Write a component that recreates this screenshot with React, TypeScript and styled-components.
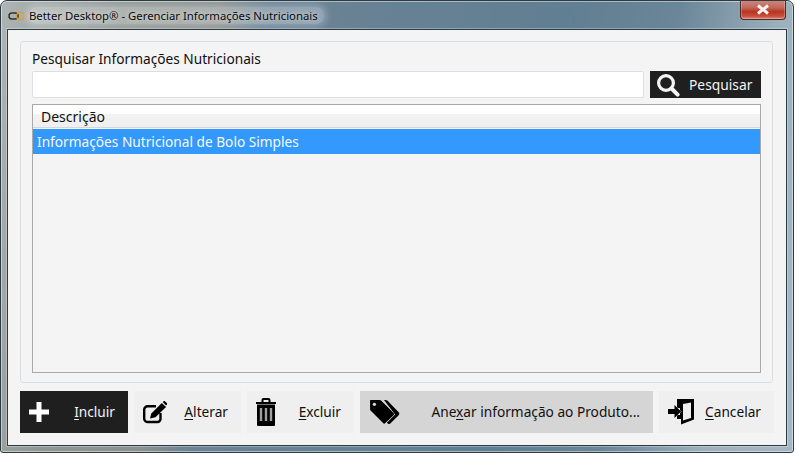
import React from "react";
import styled, { createGlobalStyle } from "styled-components";

const GlobalStyle = createGlobalStyle`
  html, body {
    margin: 0;
    padding: 0;
    background: #fff;
    font-family: "Noto Sans", "Open Sans", sans-serif;
  }
`;

const Frame = styled.div`
  width: 794px;
  height: 453px;
  box-sizing: border-box;
  display: flex;
  flex-direction: column;
  border: 1px solid #2f3b44;
  border-radius: 7px 7px 3px 3px;
  box-shadow: inset 0 0 0 1px rgba(255, 255, 255, 0.45);
  background: linear-gradient(
    100deg,
    #adb5b5 0%,
    #8f9793 14%,
    #8a928f 25%,
    #6b8395 31%,
    #617f92 65%,
    #6a8698 78%,
    #9db1bd 90%,
    #a5b7c2 100%
  );
  overflow: hidden;
`;

const TitleBar = styled.div`
  height: 28px;
  flex: none;
  display: flex;
  align-items: flex-start;
  padding-left: 7px;
`;

const TitleLogo = styled.svg`
  width: 17px;
  height: 10px;
  margin-top: 10px;
  flex: none;
`;

const TitleText = styled.span`
  margin: 6px 0 0 4px;
  padding: 0 6px 0 0;
  font-size: 11.35px;
  line-height: 17px;
  color: #0c0c0c;
  border-radius: 8px;
  background: rgba(255, 255, 255, 0.28);
  box-shadow: 0 0 7px 3px rgba(255, 255, 255, 0.24);
  text-shadow: 0 0 5px rgba(255, 255, 255, 0.8);
`;

const CloseButton = styled.div`
  width: 46px;
  height: 20px;
  margin: -1px 7px 0 auto;
  flex: none;
  display: flex;
  align-items: center;
  justify-content: center;
  box-sizing: border-box;
  border: 1px solid #4d2a28;
  border-top: none;
  border-radius: 0 0 4px 4px;
  background: linear-gradient(#d08a7e 0%, #c0685a 40%, #b8341f 62%, #c9503c 85%, #d98a78 100%);
  box-shadow: inset 0 0 0 1px rgba(255, 255, 255, 0.25);
`;

const Client = styled.div`
  flex: 1;
  margin: 0 6px 6px 6px;
  display: flex;
  flex-direction: column;
  box-sizing: border-box;
  padding: 11px 12px 12px 12px;
  gap: 8px;
  background: #f4f4f4;
  border: 1px solid #2c3a44;
  box-shadow: 0 0 0 1px rgba(255, 255, 255, 0.3);
`;

const Panel = styled.div`
  flex: 1;
  width: 753px;
  box-sizing: border-box;
  display: flex;
  flex-direction: column;
  padding: 9px 11px 9px 11px;
  border: 1px solid #d9dee3;
  border-radius: 3px;
  background: #f4f4f4;
`;

const SearchLabel = styled.label`
  font-size: 13.7px;
  line-height: 16px;
  height: 20px;
  color: #101010;
`;

const SearchRow = styled.div`
  display: flex;
  gap: 6px;
  height: 27px;
  margin-bottom: 6px;
`;

const SearchInput = styled.input`
  width: 612px;
  box-sizing: border-box;
  border: 1px solid #dcdfe3;
  border-radius: 2px;
  background: #fff;
  outline: none;
`;

const SearchButton = styled.div`
  width: 111px;
  display: flex;
  align-items: center;
  box-sizing: border-box;
  padding-left: 6px;
  gap: 9px;
  background: #1f1f1f;
  color: #f4f4f4;
  font-size: 13.8px;
`;

const Grid = styled.div`
  flex: 1;
  box-sizing: border-box;
  width: 729px;
  border: 1px solid #aaaaaa;
  background: #f4f4f4;
`;

const GridHeader = styled.div`
  height: 23px;
  box-sizing: border-box;
  padding-left: 8px;
  font-size: 14px;
  line-height: 23px;
  color: #101010;
  border-bottom: 1px solid #d6d6d6;
  background: linear-gradient(#ffffff 0%, #ffffff 40%, #f3f3f3 41%, #efefef 100%);
`;

const GridRow = styled.div<{ $selected?: boolean }>`
  height: 25px;
  margin-top: 1px;
  padding-left: 4px;
  font-size: 13.7px;
  line-height: 25px;
  color: ${(p) => (p.$selected ? "#f4f8ff" : "#101010")};
  background: ${(p) => (p.$selected ? "#3399ff" : "transparent")};
`;

const Actions = styled.div`
  display: flex;
  gap: 6px;
  height: 42px;
  flex: none;
`;

const ActionButton = styled.div<{ $width: number; $tone?: "dark" | "mid" }>`
  width: ${(p) => p.$width}px;
  box-sizing: border-box;
  display: flex;
  align-items: center;
  justify-content: space-between;
  padding: 0 13px 0 9px;
  font-size: 13.7px;
  color: ${(p) => (p.$tone === "dark" ? "#f4f4f4" : "#111")};
  background: ${(p) =>
    p.$tone === "dark" ? "#1f1f1f" : p.$tone === "mid" ? "#d5d5d5" : "#efefef"};

  span {
    padding-bottom: 2px;
  }

  u {
    text-underline-offset: 2px;
  }
`;

const SearchIcon = () => (
  <svg width="24" height="24" viewBox="0 0 24 24">
    <circle cx="10" cy="10" r="7.4" fill="none" stroke="#f4f4f4" strokeWidth="3.2" />
    <path d="M15.5 15.5 L21.6 21.6" stroke="#f4f4f4" strokeWidth="4" strokeLinecap="round" />
  </svg>
);

const PlusIcon = () => (
  <svg width="20" height="20" viewBox="0 0 20 20">
    <path d="M7.500 0h5v7.500H20v5h-7.500V20h-5v-7.500H0v-5h7.500z" fill="#fff" />
  </svg>
);

const EditIcon = () => (
  <svg width="24" height="24" viewBox="0 0 24 24">
    <path
      d="M17.500 13v6a3 3 0 0 1-3 3H5a3.500 3.500 0 0 1-3.800-3.500V10a3.500 3.500 0 0 1 3.500-3.700H13"
      fill="none"
      stroke="#000"
      strokeWidth="2.400"
    />
    <path d="M7 18.500l1.300-5L18.800 3l4.300 4L12.500 17.300z" fill="#000" />
    <path d="M19.800 2l1-1 .8 0 2.400 2.300v1l-1 1.200z" fill="#000" />
  </svg>
);

const TrashIcon = () => (
  <svg width="20" height="28" viewBox="0 0 20 28">
    <path d="M6.500 4V2a1 1 0 0 1 1-1h5a1 1 0 0 1 1 1v2" fill="none" stroke="#000" strokeWidth="2" />
    <rect x="0" y="4" width="20" height="2" fill="#000" />
    <path d="M1 6.500h18V27a1 1 0 0 1-1 1H2a1 1 0 0 1-1-1z" fill="#000" />
    <path d="M5 10v13M10 10v13M15 10v13" stroke="#a0a0a0" strokeWidth="2.400" />
  </svg>
);

const TagsIcon = () => (
  <svg width="31" height="26" viewBox="0 0 32 27">
    <path
      d="M1.500 1h9.500a2 2 0 0 1 1.400.6l13 13a1.600 1.600 0 0 1 0 2.300L16.800 25a1.600 1.600 0 0 1-2.300 0l-13-13A2 2 0 0 1 1 10.500V1.500z"
      fill="#000"
    />
    <circle cx="5.500" cy="5.500" r="1.700" fill="#d5d5d5" />
    <path
      d="M15.500 1h2a2 2 0 0 1 1.400.6l11.600 12a2.600 2.600 0 0 1 0 3.600L22 25.500a2 2 0 0 1-2.600 0L18.500 24.700 27 16z"
      fill="#000"
    />
  </svg>
);

const ExitIcon = () => (
  <svg width="26" height="26" viewBox="0 0 26 26">
    <path d="M9 0H26V20.500L13 25.500V20H9V16H12V9H9z" fill="#000" />
    <path d="M15 5L23 3.500V19L15 21.500z" fill="#efefef" />
    <path
      d="M0 10h6.500V6l6.500 6.500-6.500 6.500v-4H0z"
      fill="#000"
      stroke="#efefef"
      strokeWidth="0.800"
      paintOrder="stroke"
    />
  </svg>
);

const App: React.FC = () => {
  return (
    <>
      <GlobalStyle />
      <Frame>
        <TitleBar>
          <TitleLogo viewBox="0 0 17 10">
            <rect x="1" y="2" width="9" height="6" rx="3" fill="none" stroke="#333" strokeWidth="1.500" />
            <rect x="8.500" y="1.500" width="7.500" height="7" rx="3.500" fill="none" stroke="#dd9f2c" strokeWidth="1.500" />
          </TitleLogo>
          <TitleText>Better Desktop® - Gerenciar Informações Nutricionais</TitleText>
          <CloseButton>
            <svg width="14" height="11" viewBox="0 0 14 11">
              <path d="M2 1.500l10 8M12 1.500l-10 8" stroke="#f2f2f2" strokeWidth="3" />
            </svg>
          </CloseButton>
        </TitleBar>
        <Client>
          <Panel>
            <SearchLabel>Pesquisar Informações Nutricionais</SearchLabel>
            <SearchRow>
              <SearchInput />
              <SearchButton>
                <SearchIcon />
                Pesquisar
              </SearchButton>
            </SearchRow>
            <Grid>
              <GridHeader>Descrição</GridHeader>
              <GridRow $selected>Informações Nutricional de Bolo Simples</GridRow>
            </Grid>
          </Panel>
          <Actions>
            <ActionButton $width={108} $tone="dark">
              <PlusIcon />
              <span>
                <u>I</u>ncluir
              </span>
            </ActionButton>
            <ActionButton $width={107}>
              <EditIcon />
              <span>
                <u>A</u>lterar
              </span>
            </ActionButton>
            <ActionButton $width={107}>
              <TrashIcon />
              <span>
                <u>E</u>xcluir
              </span>
            </ActionButton>
            <ActionButton $width={293} $tone="mid">
              <TagsIcon />
              <span>
                Ane<u>x</u>ar informação ao Produto...
              </span>
            </ActionButton>
            <ActionButton $width={115}>
              <ExitIcon />
              <span>
                <u>C</u>ancelar
              </span>
            </ActionButton>
          </Actions>
        </Client>
      </Frame>
    </>
  );
};

export default App;
